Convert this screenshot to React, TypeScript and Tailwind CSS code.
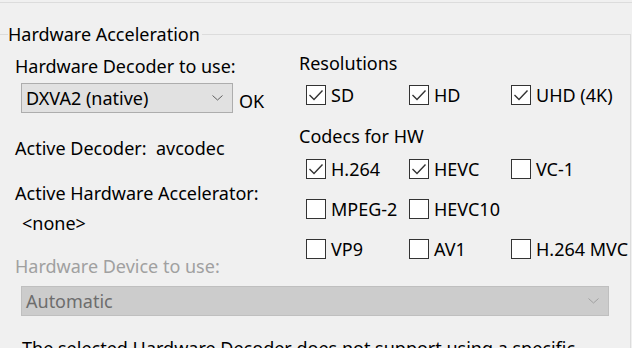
import React from "react";

const Chevron = ({ color }: { color: string }) => (
  <svg width="11" height="6" viewBox="0 0 11 6" fill="none">
    <path d="M0.5 0.5 L5.5 5 L10.5 0.5" stroke={color} strokeWidth="1" />
  </svg>
);

const Check = ({ label, checked }: { label: string; checked?: boolean }) => (
  <div className="flex items-center h-[20px]">
    <span className="w-[20px] h-[20px] border border-[#333333] bg-white flex items-center justify-center shrink-0">
      {checked && (
        <svg width="18" height="18" viewBox="0 0 18 18" fill="none">
          <path d="M2.5 9 L7 13.5 L15.5 4.5" stroke="#333333" strokeWidth="1.4" />
        </svg>
      )}
    </span>
    <span className="ml-[5px] whitespace-nowrap">{label}</span>
  </div>
);

const CheckRow = ({ items }: { items: [string, boolean][] }) => (
  <div className="grid grid-cols-[103px_102px_auto] pl-[7px]">
    {items.map(([l, c]) => (
      <Check key={l} label={l} checked={c} />
    ))}
  </div>
);

export default function App() {
  return (
    <div className="w-[632px] h-[348px] overflow-hidden bg-[#f0f0f0] text-black text-[18px] leading-[22px] font-['Noto_Sans',sans-serif]">
      <div className="h-[2px]" />
      <div className="border-t border-[#dcdcdc]" />
      <fieldset className="mt-[20px] -ml-px mr-px border border-[#dcdcdc] p-0 m-0 min-w-0">
        <legend className="ml-[8px] pr-[2px] leading-[22px]">Hardware Acceleration</legend>
        <div className="grid grid-cols-[298px_1fr]">
          <div className="pl-[15px] pt-[10px]">
            <div>Hardware Decoder to use:</div>
            <div className="flex items-end mt-[6px] ml-[6px]">
              <div className="w-[212px] h-[30px] bg-[#e1e1e1] border border-[#adadad] flex items-center justify-between pl-[4px] pr-[9px]">
                <span>DXVA2 (native)</span>
                <Chevron color="#606060" />
              </div>
              <span className="ml-[6px] mb-[1px]">OK</span>
            </div>
            <div className="mt-[24px]">Active Decoder:&nbsp; avcodec</div>
            <div className="mt-[23px]">Active Hardware Accelerator:</div>
            <div className="mt-[8px] ml-[7px]">&lt;none&gt;</div>
            <div className="mt-[21px] text-[#a0a0a0]">Hardware Device to use:</div>
          </div>
          <div className="pt-[7px] pl-[1px]">
            <div>Resolutions</div>
            <div className="mt-[11px]">
              <CheckRow items={[["SD", true], ["HD", true], ["UHD (4K)", true]]} />
            </div>
            <div className="mt-[20px]">Codecs for HW</div>
            <div className="mt-[12px] flex flex-col gap-[20px]">
              <CheckRow items={[["H.264", true], ["HEVC", true], ["VC-1", false]]} />
              <CheckRow items={[["MPEG-2", false], ["HEVC10", false]]} />
              <CheckRow items={[["VP9", false], ["AV1", false], ["H.264 MVC", false]]} />
            </div>
          </div>
        </div>
        <div className="pl-[21px] pr-[21px] mt-[9px]">
          <div className="w-[588px] h-[30px] bg-[#cccccc] border border-[#bfbfbf] flex items-center justify-between pl-[4px] pr-[9px] text-[#6d6d6d]">
            <span>Automatic</span>
            <Chevron color="#a0a0a0" />
          </div>
          <div className="mt-[21px] pl-[1px] whitespace-nowrap">
            The selected Hardware Decoder does not support using a specific
          </div>
        </div>
      </fieldset>
    </div>
  );
}
